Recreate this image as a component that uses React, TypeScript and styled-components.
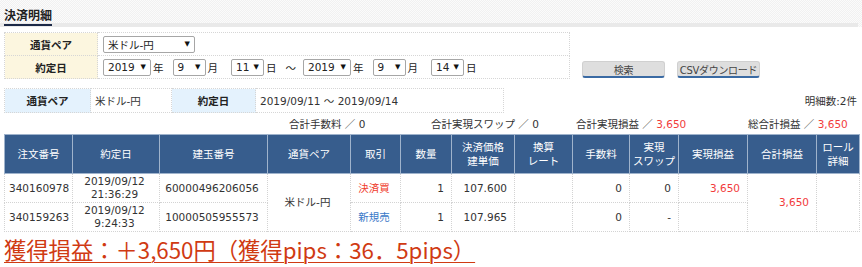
import React from "react";
import styled, { createGlobalStyle } from "styled-components";

const GlobalStyle = createGlobalStyle`
  body {
    margin: 0;
    background: #fff;
    font-family: "DejaVu Sans", "Noto Sans CJK JP", sans-serif;
    font-size: 10.5px;
    color: #333;
  }
`;

const Page = styled.div`
  width: 862px;
  height: 267px;
  overflow: hidden;
`;

/* --------------------------------- title --------------------------------- */
const TitleBar = styled.div`
  display: flex;
  align-items: flex-end;
  height: 26px;
  padding: 0 0 1px 4px;
  background:
    linear-gradient(#e9e9e9, #e9e9e9) left bottom / calc(100% - 4px) 4px no-repeat,
    repeating-conic-gradient(#f1f1f1 0 25%, #fbfbfb 0 50%) 0 0 / 2px 2px;
`;

const Title = styled.h1`
  margin: 0;
  font-size: 12px;
  line-height: 16px;
  font-weight: bold;
  color: #222;
  border-bottom: 2px solid #1c2947;
`;

const Section = styled.div`
  padding: 0 4px;
`;

/* ------------------------------- search form ------------------------------ */
const SearchRow = styled(Section)`
  display: flex;
  align-items: flex-end;
  gap: 12px;
  margin-top: 5px;
`;

const FormTable = styled.table`
  width: 566px;
  border-collapse: collapse;
  td {
    height: 22px;
    border: 1px dotted #d6d6d6;
    padding: 0;
  }
`;

const FormLabel = styled.td`
  width: 92px;
  background: #fcf6df;
  text-align: center;
  font-weight: bold;
  color: #222;
`;

const FormValue = styled.td`
  padding-left: 5px !important;
`;

const Inline = styled.div`
  display: flex;
  align-items: center;
`;

const FakeSelect = styled.span<{ $w: number }>`
  display: inline-flex;
  align-items: center;
  justify-content: space-between;
  box-sizing: border-box;
  width: ${(p) => p.$w}px;
  height: 17px;
  padding: 0 4px;
  border: 1px solid #a6a6a6;
  border-radius: 2px;
  background: #fff;
  color: #222;
  &::after {
    content: "▼";
    font-size: 7px;
    color: #111;
  }
`;

const Unit = styled.span<{ $gap?: number }>`
  margin: 0 ${(p) => p.$gap ?? 9}px 0 2px;
  color: #222;
`;

const Button = styled.button`
  width: 83px;
  height: 17px;
  padding: 0;
  margin-bottom: 1px;
  border: 1px solid #d0d0d0;
  border-bottom: 2px solid #3a6aa3;
  border-radius: 3px;
  background: #dedede;
  font-family: inherit;
  font-size: 10px;
  letter-spacing: -0.3px;
  white-space: nowrap;
  color: #444;
`;

/* --------------------------------- summary -------------------------------- */
const SummaryRow = styled(Section)`
  display: flex;
  align-items: center;
  justify-content: space-between;
  margin-top: 9px;
`;

const SummaryTable = styled.table`
  width: 500px;
  table-layout: fixed;
  border-collapse: collapse;
  td {
    box-sizing: border-box;
    height: 24px;
    border: 1px dotted #d6d6d6;
    padding: 0 4px;
  }
`;

const SummaryLabel = styled.td`
  background: #e4f2fd;
  text-align: center;
  font-weight: bold;
  color: #222;
`;

const SummaryValue = styled.td`
  color: #333;
`;

const Count = styled.span`
  margin-right: 1px;
  color: #333;
`;

const Totals = styled(Section)`
  display: flex;
  justify-content: flex-end;
  height: 17px;
  align-items: center;
  margin-top: 2px;
`;

const TotalItem = styled.span<{ $w: number }>`
  width: ${(p) => p.$w}px;
  white-space: nowrap;
`;

const Red = styled.span`
  color: #f23b3b;
`;

/* ------------------------------- main table ------------------------------- */
const DetailTable = styled.table`
  width: 855px;
  margin: 2px 4px 0;
  table-layout: fixed;
  border-collapse: collapse;
`;

const Th = styled.th`
  height: 38px;
  padding: 0;
  background: #375d8d;
  border: 1px solid #9fb3cc;
  color: #fff;
  font-weight: normal;
  line-height: 14px;
  text-align: center;
`;

const Td = styled.td<{ $align?: "left" | "center" | "right"; $color?: string }>`
  height: 28px;
  padding: 0 7px 0 4px;
  border: 1px dotted #d3d3d3;
  text-align: ${(p) => p.$align ?? "center"};
  color: ${(p) => p.$color ?? "#333"};
  line-height: 13px;
  white-space: nowrap;
`;

/* --------------------------------- result --------------------------------- */
const Result = styled.div`
  margin: 4px 0 0 4px;
  font-family: "Noto Sans CJK JP", sans-serif;
  font-size: 22.3px;
  line-height: 26px;
  color: #d03a12;
  text-decoration: underline;
  text-underline-offset: 3px;
  text-decoration-thickness: 1px;
  white-space: nowrap;
`;

const columns: [string, number][] = [
  ["注文番号", 68],
  ["約定日", 87],
  ["建玉番号", 108],
  ["通貨ペア", 83],
  ["取引", 50],
  ["数量", 51],
  ["決済価格\n建単価", 63],
  ["換算\nレート", 58],
  ["手数料", 57],
  ["実現\nスワップ", 49],
  ["実現損益", 69],
  ["合計損益", 69],
  ["ロール\n詳細", 43],
];

const rows = [
  {
    no: "340160978",
    date: "2019/09/12",
    time: "21:36:29",
    pos: "60000496206056",
    side: "決済買",
    sideColor: "#f03c2c",
    qty: "1",
    price: "107.600",
    fee: "0",
    swap: "0",
    pl: "3,650",
  },
  {
    no: "340159263",
    date: "2019/09/12",
    time: "9:24:33",
    pos: "10000505955573",
    side: "新規売",
    sideColor: "#3a78c8",
    qty: "1",
    price: "107.965",
    fee: "0",
    swap: "-",
    pl: "",
  },
];

const multiline = (s: string) =>
  s.split("\n").map((line, i) => (
    <React.Fragment key={i}>
      {i > 0 && <br />}
      {line}
    </React.Fragment>
  ));

export default function App() {
  return (
    <>
      <GlobalStyle />
      <Page>
        <TitleBar>
          <Title>決済明細</Title>
        </TitleBar>

        <SearchRow>
          <FormTable>
            <tbody>
              <tr>
                <FormLabel>通貨ペア</FormLabel>
                <FormValue>
                  <Inline>
                    <FakeSelect $w={92}>米ドル-円</FakeSelect>
                  </Inline>
                </FormValue>
              </tr>
              <tr>
                <FormLabel>約定日</FormLabel>
                <FormValue>
                  <Inline>
                    <FakeSelect $w={48}>2019</FakeSelect>
                    <Unit>年</Unit>
                    <FakeSelect $w={33}>9</FakeSelect>
                    <Unit $gap={13}>月</Unit>
                    <FakeSelect $w={33}>11</FakeSelect>
                    <Unit $gap={7}>日</Unit>
                    <Unit $gap={7}>～</Unit>
                    <FakeSelect $w={48}>2019</FakeSelect>
                    <Unit>年</Unit>
                    <FakeSelect $w={33}>9</FakeSelect>
                    <Unit $gap={13}>月</Unit>
                    <FakeSelect $w={33}>14</FakeSelect>
                    <Unit>日</Unit>
                  </Inline>
                </FormValue>
              </tr>
            </tbody>
          </FormTable>
          <Button>検索</Button>
          <Button>CSVダウンロード</Button>
        </SearchRow>

        <SummaryRow>
          <SummaryTable>
            <colgroup>
              <col style={{ width: 86 }} />
              <col style={{ width: 81 }} />
              <col style={{ width: 84 }} />
              <col />
            </colgroup>
            <tbody>
              <tr>
                <SummaryLabel>通貨ペア</SummaryLabel>
                <SummaryValue>米ドル-円</SummaryValue>
                <SummaryLabel>約定日</SummaryLabel>
                <SummaryValue>2019/09/11 ～ 2019/09/14</SummaryValue>
              </tr>
            </tbody>
          </SummaryTable>
          <Count>明細数:2件</Count>
        </SummaryRow>

        <Totals>
          <TotalItem $w={142}>合計手数料 ／ 0</TotalItem>
          <TotalItem $w={145}>合計実現スワップ ／ 0</TotalItem>
          <TotalItem $w={172}>
            合計実現損益 ／ <Red>3,650</Red>
          </TotalItem>
          <TotalItem $w={110}>
            総合計損益 ／ <Red>3,650</Red>
          </TotalItem>
        </Totals>

        <DetailTable>
          <colgroup>
            {columns.map(([, w], i) => (
              <col key={i} style={{ width: w }} />
            ))}
          </colgroup>
          <thead>
            <tr>
              {columns.map(([label], i) => (
                <Th key={i}>{multiline(label)}</Th>
              ))}
            </tr>
          </thead>
          <tbody>
            {rows.map((r, i) => (
              <tr key={r.no}>
                <Td $align="left">{r.no}</Td>
                <Td>
                  {r.date}
                  <br />
                  {r.time}
                </Td>
                <Td>{r.pos}</Td>
                {i === 0 && <Td rowSpan={2}>米ドル-円</Td>}
                <Td $color={r.sideColor}>{r.side}</Td>
                <Td $align="right">{r.qty}</Td>
                <Td $align="right">{r.price}</Td>
                <Td />
                <Td $align="right">{r.fee}</Td>
                <Td $align="right">{r.swap}</Td>
                <Td $align="right" $color="#f23b3b">
                  {r.pl}
                </Td>
                {i === 0 && (
                  <Td rowSpan={2} $align="right" $color="#f23b3b">
                    3,650
                  </Td>
                )}
                {i === 0 && <Td rowSpan={2} />}
              </tr>
            ))}
          </tbody>
        </DetailTable>

        <Result>獲得損益：＋3,650円（獲得pips：36．5pips）</Result>
      </Page>
    </>
  );
}
